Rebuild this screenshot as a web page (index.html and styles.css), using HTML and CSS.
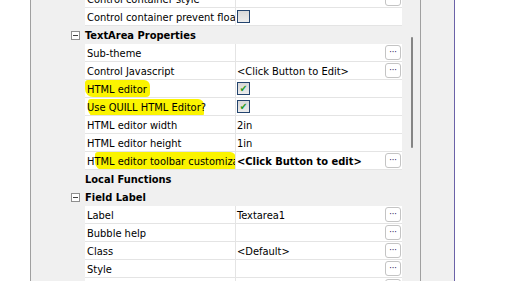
FILE: index.html
```html
<!DOCTYPE html>
<html>
<head>
<meta charset="utf-8">
<link rel="stylesheet" href="styles.css">
</head>
<body>
<div class="app">
  <div class="leftpane"></div>
  <div class="grid">
    <div class="list">
      <div class="row prop first"><div class="gut"></div><div class="name">Control container style</div><div class="val"><span class="btn">···</span></div></div>
      <div class="row prop"><div class="gut"></div><div class="name">Control container prevent float</div><div class="val"><span class="cb"></span></div></div>
      <div class="row cat"><div class="gut"><span class="exp"></span></div><div class="ctext">TextArea Properties</div></div>
      <div class="row prop"><div class="gut"></div><div class="name">Sub-theme</div><div class="val"><span class="btn">···</span></div></div>
      <div class="row prop"><div class="gut"></div><div class="name">Control Javascript</div><div class="val"><span class="vt">&lt;Click Button to Edit&gt;</span><span class="btn">···</span></div></div>
      <div class="row prop"><div class="gut"></div><div class="name"><span class="hl hl1"></span><span class="nt">HTML editor</span></div><div class="val"><span class="cb on">✔</span></div></div>
      <div class="row prop"><div class="gut"></div><div class="name"><span class="hl hl2"></span><span class="nt">Use QUILL HTML Editor?</span></div><div class="val"><span class="cb on">✔</span></div></div>
      <div class="row prop"><div class="gut"></div><div class="name">HTML editor width</div><div class="val"><span class="vt">2in</span></div></div>
      <div class="row prop"><div class="gut"></div><div class="name">HTML editor height</div><div class="val"><span class="vt">1in</span></div></div>
      <div class="row prop"><div class="gut"></div><div class="name"><span class="hl hl3"></span><span class="nt">HTML editor toolbar customization</span></div><div class="val"><span class="vt bold">&lt;Click Button to edit&gt;</span><span class="btn">···</span></div></div>
      <div class="row cat"><div class="gut"></div><div class="ctext">Local Functions</div></div>
      <div class="row cat"><div class="gut"><span class="exp"></span></div><div class="ctext">Field Label</div></div>
      <div class="row prop"><div class="gut"></div><div class="name">Label</div><div class="val"><span class="vt">Textarea1</span><span class="btn">···</span></div></div>
      <div class="row prop"><div class="gut"></div><div class="name">Bubble help</div><div class="val"><span class="btn">···</span></div></div>
      <div class="row prop"><div class="gut"></div><div class="name">Class</div><div class="val"><span class="vt">&lt;Default&gt;</span><span class="btn">···</span></div></div>
      <div class="row prop"><div class="gut"></div><div class="name">Style</div><div class="val"><span class="btn">···</span></div></div>
      <div class="row prop"><div class="gut"></div><div class="name">Width</div><div class="val"><span class="btn">···</span></div></div>
    </div>
    <div class="vscroll"><div class="thumb"></div></div>
  </div>
  <div class="side"></div>
  <div class="rest"></div>
</div>
</body>
</html>
```
FILE: styles.css
```css
html, body {
  margin: 0;
  padding: 0;
  background: #ffffff;
}
body {
  font-family: "DejaVu Sans Condensed", "DejaVu Sans", sans-serif;
  font-size: 11px;
  color: #000000;
}
.app {
  display: flex;
  height: 281px;
  width: 517px;
  overflow: hidden;
}
.leftpane {
  width: 30px;
  background: #ffffff;
  border-right: 1px solid #a0a0a0;
  flex: none;
}
.grid {
  width: 389px;
  flex: none;
  display: flex;
  background: #f0f0f0;
  border-right: 1px solid #a0a0a0;
}
.list {
  width: 371px;
  overflow: hidden;
  flex: none;
}
.row {
  display: grid;
  grid-template-columns: 54px 151px 166px;
  height: 18px;
}
.row.first {
  margin-top: -10px;
}
.gut {
  background: #f0f0f0;
  display: flex;
  justify-content: flex-end;
  align-items: center;
  padding-right: 5px;
}
.name {
  position: relative;
  box-sizing: border-box;
  height: 18px;
  background: #ffffff;
  border-right: 1px solid #e4e4e4;
  border-bottom: 1px solid #e4e4e4;
  padding-left: 2px;
  padding-top: 2px;
  line-height: 15px;
  white-space: nowrap;
  overflow: hidden;
}
.nt {
  position: relative;
}
.val {
  box-sizing: border-box;
  height: 18px;
  background: #ffffff;
  border-bottom: 1px solid #e4e4e4;
  display: flex;
  align-items: center;
  padding-left: 1px;
  white-space: nowrap;
  overflow: hidden;
}
.vt {
  flex: 1;
  padding-top: 2px;
  line-height: 15px;
}
.bold {
  font-weight: bold;
}
.btn {
  margin-left: auto;
  margin-right: 1px;
  width: 14px;
  height: 13px;
  border: 1px solid #c4c4c4;
  border-radius: 3px;
  background: #ffffff;
  color: #1a1050;
  font-size: 9px;
  line-height: 12px;
  text-align: center;
  letter-spacing: 0;
  flex: none;
}
.cb {
  width: 11px;
  height: 11px;
  border: 1px solid #23446e;
  background: linear-gradient(#d8d8d8, #ececec);
  color: #1f9a1f;
  font-size: 10px;
  line-height: 11px;
  text-align: center;
  flex: none;
}
.cat {
  background: #f0f0f0;
}
.ctext {
  grid-column: 2 / 4;
  font-weight: bold;
  padding-top: 2px;
  line-height: 16px;
  white-space: nowrap;
}
.exp {
  width: 7px;
  height: 7px;
  border: 1px solid #8f8f8f;
  background: #ffffff;
  position: relative;
}
.exp::after {
  content: "";
  position: absolute;
  left: 1px;
  top: 3px;
  width: 5px;
  height: 1px;
  background: #404040;
}
.hl {
  position: absolute;
  background: #fbf400;
  border-radius: 3px 6px 4px 8px;
}
.hl1 {
  left: 0;
  top: 0;
  width: 65px;
  height: 17px;
}
.hl2 {
  left: 3px;
  top: 1px;
  width: 116px;
  height: 18px;
}
.hl3 {
  left: 10px;
  top: 0;
  width: 141px;
  height: 18px;
}
.vscroll {
  width: 18px;
  flex: none;
  background: #f0f0f0;
  position: relative;
}
.thumb {
  position: absolute;
  left: 9px;
  top: 37px;
  width: 2px;
  height: 111px;
  background: #858585;
  border-radius: 1px;
}
.side {
  width: 33px;
  flex: none;
  background: #f0f0f0;
  border-right: 1px solid #6b62a8;
}
.rest {
  flex: 1;
  background: #ffffff;
}
```
